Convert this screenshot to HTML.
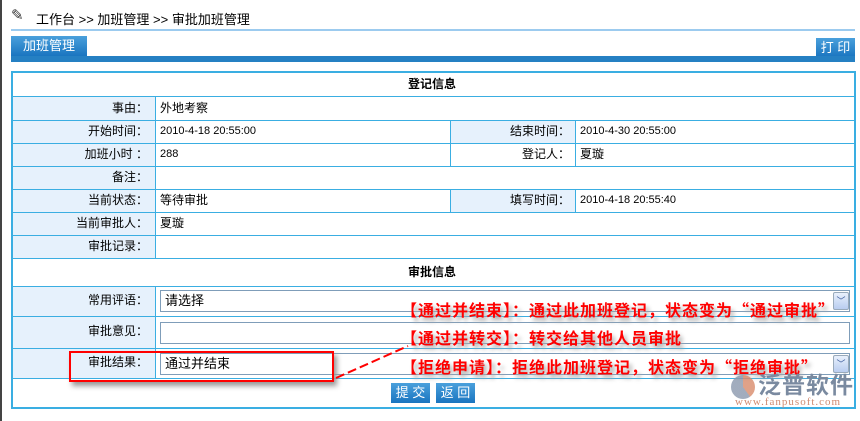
<!DOCTYPE html><html><head><meta charset="utf-8"><style>
*{margin:0;padding:0;box-sizing:border-box}
body{width:860px;height:421px;background:#fff;font-family:"Liberation Sans","Noto Sans CJK SC",sans-serif;font-size:12px;color:#000;position:relative;overflow:hidden}
.a{position:absolute}
.lb{background:#e6f1fc}
.h{position:absolute;height:1px;background:#3aaee2}
.v{position:absolute;width:1px;background:#3aaee2}
.t{position:absolute;line-height:22px;white-space:nowrap}
.in{position:absolute;border:1px solid #7f9db9;background:#fff;height:22px;line-height:20px;padding-left:4px;font-size:13px}
.dd{position:absolute;width:16px;height:18px;border:1px solid #9ab;background:linear-gradient(#e8f0fc,#b9cdf0);border-radius:2px;font-size:9px;color:#3a5a9a;text-align:center;line-height:16px}
.red{position:absolute;color:#f00;font-weight:bold;font-size:16px;letter-spacing:1px;white-space:nowrap;text-shadow:3px 4px 4px #aaa;font-family:"Noto Sans CJK SC",sans-serif;line-height:20px}
.btn{position:absolute;background:linear-gradient(#4aa0dc,#1a75c0);color:#fff;font-size:13px;text-align:center;white-space:nowrap}
</style></head><body>
<div class="a" style="left:0;top:0;width:2px;height:421px;background:#444"></div>
<div class="a" style="left:11px;top:6px;font-size:15px;color:#333">✎</div>
<div class="a" style="left:36px;top:9px;font-size:13px">工作台 &gt;&gt; 加班管理 &gt;&gt; 审批加班管理</div>
<div class="a" style="left:11px;top:29px;width:844px;height:2px;background:#9ccbef"></div>
<div class="btn" style="left:11px;top:36px;width:76px;height:20px;line-height:20px">加班管理</div>
<div class="btn" style="left:816px;top:38px;width:39px;height:19px;line-height:19px">打&nbsp;印</div>
<div class="a" style="left:11px;top:56px;width:844px;height:6px;background:#2580c3"></div>
<div class="a" style="left:11px;top:71px;width:845px;height:338px;border:2px solid #3aaee2"></div>
<div class="a lb" style="left:13px;top:97px;width:142px;height:161px"></div>
<div class="a lb" style="left:451px;top:120px;width:124px;height:23px"></div>
<div class="a lb" style="left:451px;top:189px;width:124px;height:23px"></div>
<div class="a lb" style="left:13px;top:286px;width:142px;height:92px"></div>
<div class="h" style="left:11px;top:96px;width:845px"></div>
<div class="h" style="left:11px;top:120px;width:845px"></div>
<div class="h" style="left:11px;top:143px;width:845px"></div>
<div class="h" style="left:11px;top:166px;width:845px"></div>
<div class="h" style="left:11px;top:189px;width:845px"></div>
<div class="h" style="left:11px;top:212px;width:845px"></div>
<div class="h" style="left:11px;top:235px;width:845px"></div>
<div class="h" style="left:11px;top:258px;width:845px"></div>
<div class="h" style="left:11px;top:286px;width:845px"></div>
<div class="h" style="left:11px;top:316px;width:845px"></div>
<div class="h" style="left:11px;top:348px;width:845px"></div>
<div class="h" style="left:11px;top:378px;width:845px"></div>
<div class="v" style="left:155px;top:96px;height:163px"></div>
<div class="v" style="left:155px;top:286px;height:92px"></div>
<div class="v" style="left:450px;top:120px;height:46px"></div>
<div class="v" style="left:450px;top:189px;height:23px"></div>
<div class="v" style="left:575px;top:120px;height:46px"></div>
<div class="v" style="left:575px;top:189px;height:23px"></div>
<div class="t" style="left:408px;top:73px;font-weight:bold">登记信息</div>
<div class="t" style="left:408px;top:261px;font-weight:bold">审批信息</div>
<div class="t" style="right:712px;top:97px">事由：</div><div class="t" style="left:160px;top:97px">外地考察</div>
<div class="t" style="right:712px;top:120px">开始时间：</div><div class="t" style="left:160px;top:120px;font-size:11px">2010-4-18 20:55:00</div>
<div class="t" style="right:290px;top:120px">结束时间：</div><div class="t" style="left:580px;top:120px;font-size:11px">2010-4-30 20:55:00</div>
<div class="t" style="right:712px;top:143px">加班小时 ：</div><div class="t" style="left:160px;top:143px;font-size:11px">288</div>
<div class="t" style="right:290px;top:143px">登记人：</div><div class="t" style="left:580px;top:143px">夏璇</div>
<div class="t" style="right:712px;top:166px">备注：</div>
<div class="t" style="right:712px;top:189px">当前状态：</div><div class="t" style="left:160px;top:189px">等待审批</div>
<div class="t" style="right:290px;top:189px">填写时间：</div><div class="t" style="left:580px;top:189px;font-size:11px">2010-4-18 20:55:40</div>
<div class="t" style="right:712px;top:212px">当前审批人：</div><div class="t" style="left:160px;top:212px">夏璇</div>
<div class="t" style="right:712px;top:235px">审批记录：</div>
<div class="t" style="right:712px;top:289px">常用评语：</div>
<div class="t" style="right:712px;top:320px">审批意见：</div>
<div class="t" style="right:712px;top:351px">审批结果：</div>
<div class="in" style="left:160px;top:290px;width:690px">请选择</div><div class="dd" style="left:833px;top:292px">﹀</div>
<div class="in" style="left:160px;top:322px;width:690px"></div>
<div class="in" style="left:160px;top:353px;width:690px">通过并结束</div><div class="dd" style="left:833px;top:355px">﹀</div>
<div class="btn" style="left:391px;top:383px;width:39px;height:20px;line-height:20px">提&nbsp;交</div>
<div class="btn" style="left:436px;top:383px;width:39px;height:20px;line-height:20px">返&nbsp;回</div>
<div class="a" style="left:69px;top:351px;width:265px;height:31px;border:2px solid #f00;box-shadow:3px 4px 5px #999"></div>
<svg class="a" style="left:0;top:0" width="860" height="421"><line x1="336" y1="378" x2="408" y2="346" stroke="#f00" stroke-width="2" stroke-dasharray="9,4"/></svg>
<div class="red" style="left:401px;top:299px">【通过并结束】：通过此加班登记，状态变为“通过审批”</div>
<div class="red" style="left:401px;top:327px">【通过并转交】：转交给其他人员审批</div>
<div class="red" style="left:401px;top:356px">【拒绝申请】：拒绝此加班登记，状态变为“拒绝审批”</div>
<div class="a" style="left:731px;top:375px;width:24px;height:24px;border-radius:50%;background:conic-gradient(#d88a6a 0 40%,#8a98ad 40% 100%);opacity:.8"></div>
<div class="a" style="left:758px;top:370px;font-size:23px;line-height:26px;color:#7a8aa0;font-weight:bold;letter-spacing:1px;font-family:'Noto Sans CJK SC',sans-serif">泛普软件</div>
<div class="a" style="left:735px;top:396px;font-size:11px;line-height:12px;color:#d08a70;letter-spacing:1px;font-family:'Liberation Serif',serif">www.fanpusoft.com</div>
</body></html>
